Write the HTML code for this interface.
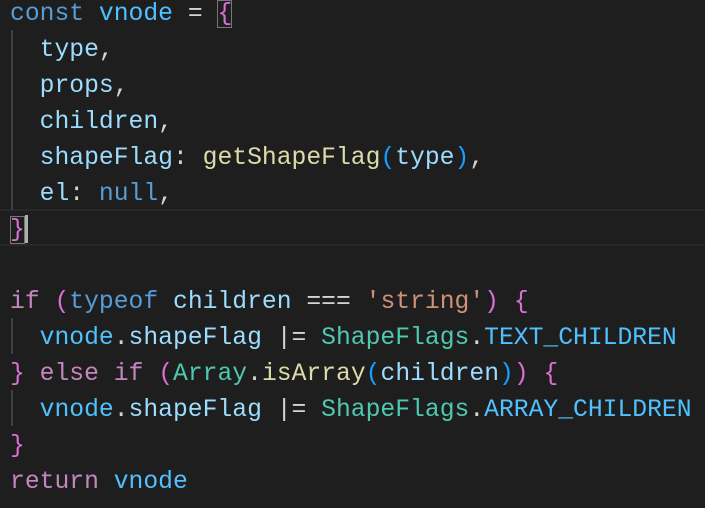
<!DOCTYPE html>
<html><head><style>
html,body{margin:0;padding:0;background:#1e1e1e;width:705px;height:508px;overflow:hidden}
.c{position:absolute;left:10px;top:-4px;font-family:"Liberation Mono",monospace;font-size:24.7px;line-height:36px;color:#9cdcfe}
.l{height:36px;position:relative;white-space:pre}
.k{color:#569cd6}.v{color:#4fc1ff}.p{color:#c586c0}.b{color:#da70d6}.f{color:#dcdcaa}.t{color:#4ec9b0}.s{color:#ce9178}.w{color:#d4d4d4}.bl{color:#179fff}
.g{position:absolute;left:11px;width:2px;background:#404040}
.cur{border-top:2px solid #282828;border-bottom:2px solid #282828;position:absolute;left:0;width:705px;top:209px;height:33px}
.box{outline:1px solid #777;outline-offset:-1px}
</style></head><body>
<div class="cur"></div>
<div class="g" style="top:30px;height:180px"></div>
<div class="g" style="top:318px;height:36px"></div>
<div class="g" style="top:390px;height:36px"></div>
<div style="position:absolute;left:25px;top:215px;width:3px;height:28px;background:#aeafad"></div>
<div class="c"><div class="l"><span class="k">const</span> <span class="v">vnode</span> <span class="w">=</span> <span class="b box">{</span></div><div class="l">  type<span class="w">,</span></div><div class="l">  props<span class="w">,</span></div><div class="l">  children<span class="w">,</span></div><div class="l">  shapeFlag<span class="w">:</span> <span class="f">getShapeFlag</span><span class="bl">(</span>type<span class="bl">)</span><span class="w">,</span></div><div class="l">  el<span class="w">:</span> <span class="k">null</span><span class="w">,</span></div><div class="l"><span class="b box">}</span></div><div class="l"> </div><div class="l"><span class="p">if</span> <span class="b">(</span><span class="k">typeof</span> children <span class="w">===</span> <span class="s">'string'</span><span class="b">)</span> <span class="b">{</span></div><div class="l">  <span class="v">vnode</span><span class="w">.</span>shapeFlag <span class="w">|=</span> <span class="t">ShapeFlags</span><span class="w">.</span><span class="v">TEXT_CHILDREN</span></div><div class="l"><span class="b">}</span> <span class="p">else</span> <span class="p">if</span> <span class="b">(</span><span class="t">Array</span><span class="w">.</span><span class="f">isArray</span><span class="bl">(</span>children<span class="bl">)</span><span class="b">)</span> <span class="b">{</span></div><div class="l">  <span class="v">vnode</span><span class="w">.</span>shapeFlag <span class="w">|=</span> <span class="t">ShapeFlags</span><span class="w">.</span><span class="v">ARRAY_CHILDREN</span></div><div class="l"><span class="b">}</span></div><div class="l"><span class="p">return</span> <span class="v">vnode</span></div></div>
</body></html>
